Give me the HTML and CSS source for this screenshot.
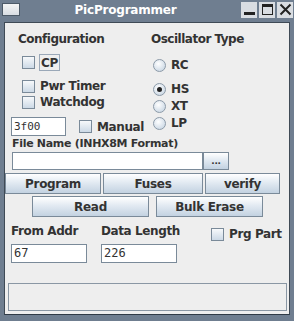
FILE: index.html
```html
<!DOCTYPE html>
<html lang="en">
<head>
  <meta charset="UTF-8" />
  <title>PicProgrammer</title>
  <link rel="stylesheet" href="styles.css">
</head>
<body>

  <div class="window">

    <!-- Barra de titulo -->
    <div class="titlebar">
      <div class="app-icon"></div>
      <div class="title">PicProgrammer</div>
      <div class="win-buttons">
        <span class="wbtn"><svg width="13" height="13" viewBox="0 0 13 13"><rect x="1" y="9" width="11" height="3" fill="#222"/></svg></span>
        <span class="wbtn"><svg width="13" height="13" viewBox="0 0 13 13"><rect x="1.5" y="1.5" width="10" height="10" fill="none" stroke="#222"/><rect x="1" y="1" width="11" height="3" fill="#222"/></svg></span>
        <span class="wbtn"><svg width="13" height="13" viewBox="0 0 13 13"><path d="M1.5 1.5 L11.5 11.5 M11.5 1.5 L1.5 11.5" stroke="#222" stroke-width="2"/></svg></span>
      </div>
    </div>

    <div class="content">

      <!-- Configuracion y oscilador -->
      <div class="top">
        <div class="config">
          <div class="heading">Configuration</div>
          <label class="check cp"><span class="box"></span><span class="lbl focus">CP</span></label>
          <label class="check pwr"><span class="box"></span><span class="lbl">Pwr Timer</span></label>
          <label class="check wdt"><span class="box"></span><span class="lbl">Watchdog</span></label>
          <div class="manual-row">
            <div class="field small">3f00</div>
            <label class="check manual"><span class="box"></span><span class="lbl">Manual</span></label>
          </div>
        </div>
        <div class="osc">
          <div class="heading">Oscillator Type</div>
          <label class="radio rc"><span class="dot"></span><span class="lbl">RC</span></label>
          <label class="radio hs"><span class="dot on"></span><span class="lbl">HS</span></label>
          <label class="radio xt"><span class="dot"></span><span class="lbl">XT</span></label>
          <label class="radio lp"><span class="dot"></span><span class="lbl">LP</span></label>
        </div>
      </div>

      <!-- Archivo -->
      <div class="file-label">File Name (INHX8M Format)</div>
      <div class="file-row">
        <div class="field file"></div>
        <button class="btn browse">...</button>
      </div>

      <!-- Botones -->
      <div class="btn-row1">
        <button class="btn b-program">Program</button>
        <button class="btn b-fuses">Fuses</button>
        <button class="btn b-verify">verify</button>
      </div>
      <div class="btn-row2">
        <button class="btn b-read">Read</button>
        <button class="btn b-erase">Bulk Erase</button>
      </div>

      <!-- Direcciones -->
      <div class="addr-row">
        <div class="addr-col from">
          <div class="addr-label">From Addr</div>
          <div class="field addr">67</div>
        </div>
        <div class="addr-col len">
          <div class="addr-label">Data Length</div>
          <div class="field addr">226</div>
        </div>
        <label class="check prg"><span class="box"></span><span class="lbl">Prg Part</span></label>
      </div>

      <div class="status"></div>
    </div>
  </div>

</body>
</html>
```

FILE: styles.css
```css
body {
  margin: 0;
  background: #6b7a8c;
  font-family: "DejaVu Sans", sans-serif;
  font-size: 11px;
  font-weight: bold;
  color: #333333;
  white-space: nowrap;
}

.window {
  width: 294px;
  height: 321px;
  box-sizing: border-box;
  background: #6f7e90;
  padding: 0 4px 6px 4px;
  display: flex;
  flex-direction: column;
}

/* Barra de titulo */
.titlebar {
  height: 22px;
  display: flex;
  align-items: center;
  flex-shrink: 0;
}
.app-icon {
  width: 16px;
  height: 11px;
  margin-left: -2px;
  margin-top: -3px;
  background: linear-gradient(#f4f4f4, #d8dde3);
  border: 1px solid #4d5a68;
}
.title {
  flex: 1;
  text-align: center;
  color: #ffffff;
  font-size: 12px;
  letter-spacing: -0.2px;
  margin-top: -3px;
  margin-left: -10px;
}
.win-buttons {
  display: flex;
  gap: 2px;
  margin-right: -3px;
  margin-top: -3px;
}
.wbtn {
  width: 16px;
  height: 16px;
  background: #d9dde2;
  display: flex;
  align-items: center;
  justify-content: center;
}

.content {
  flex: 1;
  background: #eeeeee;
  border: 1px solid #3f4a56;
  border-bottom-color: #2f3a46;
  position: relative;
}

/* Columnas de arriba */
.top {
  display: flex;
  height: 112px;
}
.config {
  width: 132px;
  padding-left: 13px;
}
.osc {
  padding-left: 1px;
}
.heading {
  height: 15px;
  line-height: 15px;
  margin-top: 9px;
  font-size: 12px;
  letter-spacing: -0.5px;
}

.check, .radio {
  display: flex;
  align-items: center;
  height: 16px;
}
.box {
  width: 11px;
  height: 11px;
  border: 1px solid #7a8a99;
  background: linear-gradient(#f7f9fb, #ccd9e6);
  margin-right: 5px;
  flex-shrink: 0;
}
.dot {
  width: 11px;
  height: 11px;
  border-radius: 50%;
  border: 1px solid #8c9aa8;
  background: radial-gradient(circle at 40% 35%, #ffffff, #d2dde8 70%);
  margin-right: 5px;
  position: relative;
  flex-shrink: 0;
}
.dot.on::after {
  content: "";
  position: absolute;
  left: 3px;
  top: 3px;
  width: 5px;
  height: 5px;
  border-radius: 50%;
  background: #222;
}
.lbl {
  font-size: 12px;
  letter-spacing: -0.4px;
}
.lbl.focus {
  border: 1px solid #9aa8b8;
  padding: 1px 1px 0 1px;
  margin-left: -1px;
}

.check.cp { margin-top: 7px; margin-left: 4px; }
.check.pwr { margin-top: 8px; margin-left: 4px; }
.check.wdt { margin-top: 0; margin-left: 4px; }

.radio.rc { margin-top: 10px; margin-left: 2px; }
.radio.hs { margin-top: 8px; margin-left: 2px; }
.radio.xt { margin-top: 1px; margin-left: 2px; }
.radio.lp { margin-top: 1px; margin-left: 2px; }

.manual-row {
  display: flex;
  align-items: center;
  margin-top: 7px;
  margin-left: -7px;
}
.check.manual { margin-left: 13px; }

/* Campos de texto */
.field {
  background: #ffffff;
  border: 1px solid #7a8a99;
  box-sizing: border-box;
  font-family: "DejaVu Sans Mono", monospace;
  font-weight: normal;
  font-size: 11px;
  color: #333333;
  padding-left: 2px;
}
.field.small {
  width: 55px;
  height: 19px;
  line-height: 17px;
}

.file-label {
  margin-left: 7px;
  margin-top: 2px;
  height: 13px;
  line-height: 13px;
  font-size: 11px;
  letter-spacing: -0.3px;
}
.file-row {
  display: flex;
  margin-left: 7px;
  margin-top: 2px;
}
.field.file {
  width: 191px;
  height: 18px;
}

/* Botones */
.btn {
  font-family: "DejaVu Sans", sans-serif;
  font-weight: bold;
  font-size: 12px;
  letter-spacing: -0.3px;
  color: #333333;
  border: 1px solid #7a8a99;
  border-radius: 0;
  background: linear-gradient(#ffffff, #e2eaf2 45%, #c3d2e1);
  padding: 0;
  margin: 0;
  box-sizing: border-box;
}
.btn.browse {
  width: 26px;
  height: 18px;
  font-size: 9px;
  line-height: 10px;
}

.btn-row1 {
  display: flex;
  gap: 2px;
  margin-top: 3px;
  height: 21px;
}
.btn-row1 .btn { height: 21px; }
.b-program { width: 96px; }
.b-fuses { width: 100px; }
.b-verify { width: 75px; }

.btn-row2 {
  display: flex;
  gap: 7px;
  margin-top: 2px;
  margin-left: 27px;
}
.btn-row2 .btn { height: 21px; }
.b-read { width: 117px; }
.b-erase { width: 107px; }

/* Direcciones */
.addr-row {
  display: flex;
  margin-top: 7px;
  margin-left: 6px;
}
.addr-col { width: 76px; }
.addr-col.len { margin-left: 14px; }
.addr-label {
  font-size: 12px;
  letter-spacing: -0.4px;
  height: 15px;
  line-height: 15px;
  margin-bottom: 5px;
}
.field.addr {
  width: 76px;
  height: 19px;
  line-height: 17px;
  font-size: 12px;
}
.check.prg {
  align-self: flex-start;
  margin-left: 34px;
  margin-top: 2px;
}

.status {
  position: absolute;
  left: 3px;
  right: 2px;
  bottom: 3px;
  height: 26px;
  border: 1px solid #8a97a4;
  background: #eeeeee;
}
```
